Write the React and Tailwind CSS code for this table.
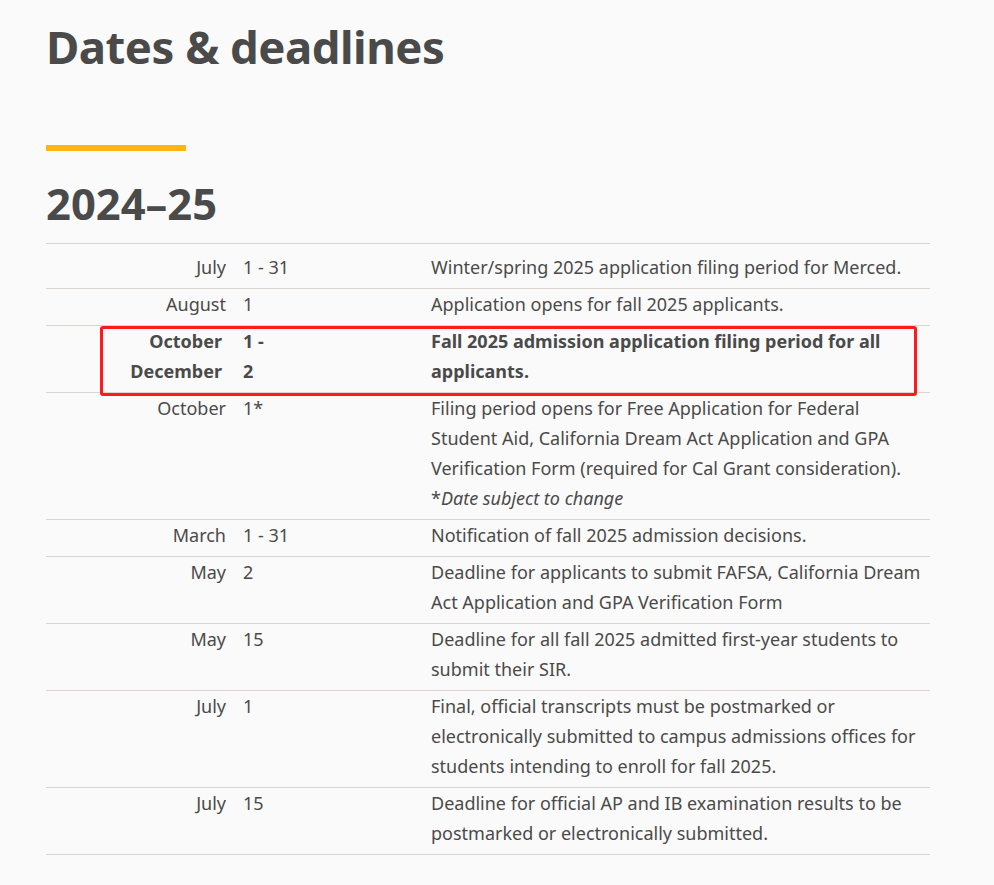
import React from "react";

const rows = [
  { month: "July", day: "1 - 31", text: "Winter/spring 2025 application filing period for Merced.", first: true },
  { month: "August", day: "1", text: "Application opens for fall 2025 applicants." },
  {
    month: "October\nDecember",
    day: "1 -\n2",
    text: "Fall 2025 admission application filing period for all applicants.",
    bold: true,
    marked: true,
  },
  {
    month: "October",
    day: "1*",
    text: "Filing period opens for Free Application for Federal Student Aid, California Dream Act Application and GPA Verification Form (required for Cal Grant consideration).",
    note: "Date subject to change",
  },
  { month: "March", day: "1 - 31", text: "Notification of fall 2025 admission decisions." },
  { month: "May", day: "2", text: "Deadline for applicants to submit FAFSA, California Dream Act Application and GPA Verification Form" },
  { month: "May", day: "15", text: "Deadline for all fall 2025 admitted first-year students to submit their SIR." },
  {
    month: "July",
    day: "1",
    text: "Final, official transcripts must be postmarked or electronically submitted to campus admissions offices for students intending to enroll for fall 2025.",
  },
  { month: "July", day: "15", text: "Deadline for official AP and IB examination results to be postmarked or electronically submitted." },
];

const Row = ({ row }) => (
  <div
    className={`relative grid grid-cols-[197px_188px_1fr] border-b border-[#ddd6cd] pb-[6px] ${
      row.first ? "pt-[8px]" : ""
    } ${row.bold ? "font-bold" : ""}`}
  >
    <div className={`whitespace-pre-line text-right ${row.bold ? "pr-[21px]" : "pr-[17px]"}`}>{row.month}</div>
    <div className="whitespace-pre-line">{row.day}</div>
    <div>
      {row.text}
      {row.note && (
        <div>
          *<em>{row.note}</em>
        </div>
      )}
    </div>
    {row.marked && (
      <div className="absolute left-[54px] right-[13px] top-[0px] bottom-[-4px] border-[3px] border-[#ff1a1a] rounded-[3px]" />
    )}
  </div>
);

export default function App() {
  return (
    <div className="min-h-screen bg-[#fafafa] text-[#4a4a4a] font-['Noto_Sans',sans-serif] pl-[46px] pr-[64px] pt-[14px] pb-8">
      <h1 className="text-[45.5px] font-bold leading-[64px] tracking-[-0.5px]">Dates &amp; deadlines</h1>
      <div className="mt-[67px] h-[6px] w-[140px] bg-[#ffb511]" />
      <h2 className="mt-[25px] text-[43.5px] font-bold leading-[54px]">2024–25</h2>
      <div className="mt-[13px] border-t border-[#ddd6cd] text-[18px] leading-[30px]">
        {rows.map((row, i) => (
          <Row key={i} row={row} />
        ))}
      </div>
    </div>
  );
}
